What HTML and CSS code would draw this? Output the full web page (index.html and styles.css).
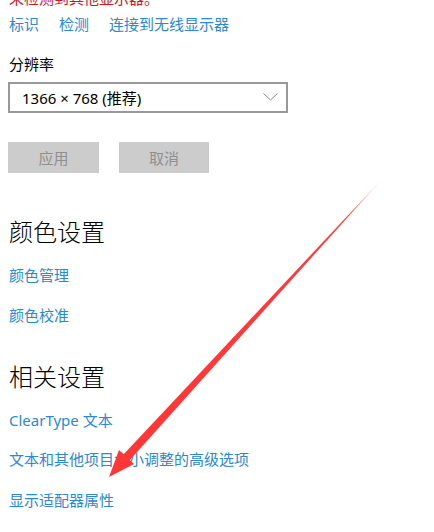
FILE: index.html
```html
<!DOCTYPE html>
<html lang="zh-CN">
<head>
    <meta charset="UTF-8">
    <meta name="viewport" content="width=device-width, initial-scale=1.0">
    <title>显示设置</title>
    <link rel="stylesheet" href="styles.css">
</head>
<body>

    <div class="settings">
        <p class="note">未检测到其他显示器。</p>

        <div class="link-row">
            <a class="link" href="#">标识</a>
            <a class="link" href="#">检测</a>
            <a class="link" href="#">连接到无线显示器</a>
        </div>

        <p class="label">分辨率</p>
        <div class="select">
            <span>1366 × 768 (推荐)</span>
            <svg class="chevron" width="15" height="8" viewBox="0 0 15 8">
                <path d="M0.5 0.5 L7.5 7 L14.5 0.5" fill="none" stroke="#8a8a8a" stroke-width="1"/>
            </svg>
        </div>

        <div class="actions">
            <button class="btn" disabled>应用</button>
            <button class="btn" disabled>取消</button>
        </div>

        <h2 class="section-title first">颜色设置</h2>
        <a class="link block first" href="#">颜色管理</a>
        <a class="link block" href="#">颜色校准</a>

        <h2 class="section-title">相关设置</h2>
        <a class="link block first" href="#">ClearType 文本</a>
        <a class="link block mid" href="#">文本和其他项目大小调整的高级选项</a>
        <a class="link block last" href="#">显示适配器属性</a>
    </div>

    <!-- annotation arrow drawn over the page -->
    <svg class="arrow" width="434" height="532" viewBox="0 0 434 532">
        <defs>
            <linearGradient id="fade" x1="383" y1="178" x2="126" y2="458" gradientUnits="userSpaceOnUse">
                <stop offset="0" stop-color="#ff3b3b" stop-opacity="0.1"/>
                <stop offset="0.15" stop-color="#ff3b3b" stop-opacity="1"/>
                <stop offset="1" stop-color="#ff3636" stop-opacity="1"/>
            </linearGradient>
        </defs>
        <polygon points="383,178 129,461 123,455" fill="url(#fade)"/>
        <polygon points="109,477 119,450 134,464" fill="#ff3636"/>
    </svg>

</body>
</html>
```

FILE: styles.css
```css
* { margin: 0; padding: 0; box-sizing: border-box; }

body {
    font-family: "Noto Sans", "Noto Sans CJK SC", sans-serif;
    background: #ffffff;
    color: #000000;
    overflow: hidden;
    height: 532px;
}

.settings {
    padding-left: 9px;
    font-size: 15px;
}

.note {
    color: #d0141e;
    line-height: 20px;
    margin-top: -12px;
}

.link {
    color: #2b88d4;
    text-decoration: none;
    line-height: 20px;
}

.link-row {
    display: flex;
    gap: 20px;
    margin-top: 6px;
}

.label {
    line-height: 20px;
    margin-top: 20px;
}

.select {
    display: flex;
    align-items: center;
    justify-content: space-between;
    width: 280px;
    height: 31px;
    margin-top: 8px;
    margin-left: -1px;
    padding: 0 8px 0 12px;
    border: 2px solid #999999;
}

.chevron { margin-top: -1px; }

.actions {
    display: flex;
    gap: 20px;
    margin-top: 29px;
    margin-left: -1px;
}

.btn {
    width: 91px;
    height: 31px;
    border: none;
    background: #cccccc;
    color: #8f8f8f;
    font-family: inherit;
    font-size: 15px;
}
.btn + .btn { width: 90px; }

.section-title {
    font-size: 24px;
    font-weight: 300;
    line-height: 32px;
    margin-top: 36px;
}
.section-title.first { margin-top: 43px; }

.link.block { display: block; margin-top: 20px; }
.link.block.first { margin-top: 17px; }
.link.block.mid { margin-top: 19px; }
.link.block.last { margin-top: 21px; }

.arrow {
    position: absolute;
    left: 0;
    top: 0;
    pointer-events: none;
}
```
